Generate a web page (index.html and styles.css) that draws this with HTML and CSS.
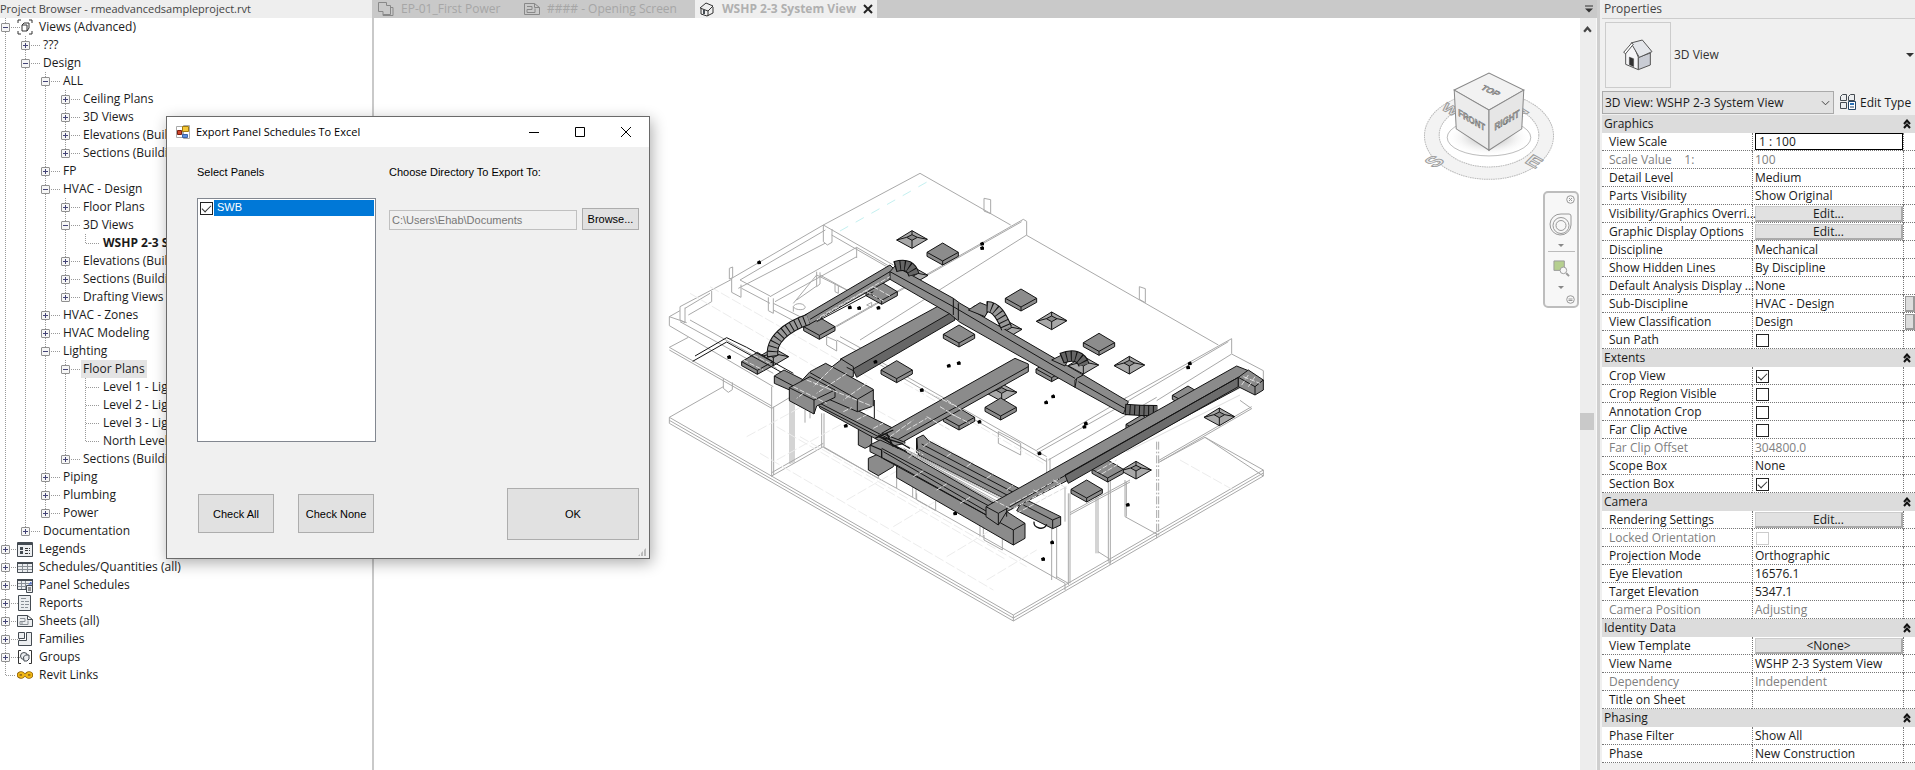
FILE: index.html
```html
<!DOCTYPE html>
<html lang="en">
<head>
<meta charset="utf-8">
<title>rmeadvancedsampleproject.rvt</title>
<link rel="stylesheet" href="styles.css">
</head>
<body>
<div class="app">
<aside class="browser">
<h2 class="panel-title">Project Browser - rmeadvancedsampleproject.rvt</h2>
<ul class="tree">
<li><div class="row"><button class="tg open" aria-label="Collapse"></button><i class="ln"></i><svg class="ico" viewBox="0 0 16 16"><path d="M1 4V1h3M12 1h3v3M15 12v3h-3M4 15H1v-3M5 6l2-2h5v5l-2 3H5zM5 6h5v6" /></svg><span>Views (Advanced)</span></div>
<ul>
<li><div class="row"><button class="tg" aria-label="Expand"></button><i class="ln"></i><span>???</span></div></li>
<li><div class="row"><button class="tg open" aria-label="Collapse"></button><i class="ln"></i><span>Design</span></div>
<ul>
<li><div class="row"><button class="tg open" aria-label="Collapse"></button><i class="ln"></i><span>ALL</span></div>
<ul>
<li><div class="row"><button class="tg" aria-label="Expand"></button><i class="ln"></i><span>Ceiling Plans</span></div></li>
<li><div class="row"><button class="tg" aria-label="Expand"></button><i class="ln"></i><span>3D Views</span></div></li>
<li><div class="row"><button class="tg" aria-label="Expand"></button><i class="ln"></i><span>Elevations (Build</span></div></li>
<li><div class="row"><button class="tg" aria-label="Expand"></button><i class="ln"></i><span>Sections (Buildin</span></div></li>
</ul></li>
<li><div class="row"><button class="tg" aria-label="Expand"></button><i class="ln"></i><span>FP</span></div></li>
<li><div class="row"><button class="tg open" aria-label="Collapse"></button><i class="ln"></i><span>HVAC - Design</span></div>
<ul>
<li><div class="row"><button class="tg" aria-label="Expand"></button><i class="ln"></i><span>Floor Plans</span></div></li>
<li><div class="row"><button class="tg open" aria-label="Collapse"></button><i class="ln"></i><span>3D Views</span></div>
<ul><li><div class="row"><i class="ln leaf"></i><b>WSHP 2-3 S</b></div></li></ul></li>
<li><div class="row"><button class="tg" aria-label="Expand"></button><i class="ln"></i><span>Elevations (Build</span></div></li>
<li><div class="row"><button class="tg" aria-label="Expand"></button><i class="ln"></i><span>Sections (Buildin</span></div></li>
<li><div class="row"><button class="tg" aria-label="Expand"></button><i class="ln"></i><span>Drafting Views (</span></div></li>
</ul></li>
<li><div class="row"><button class="tg" aria-label="Expand"></button><i class="ln"></i><span>HVAC - Zones</span></div></li>
<li><div class="row"><button class="tg" aria-label="Expand"></button><i class="ln"></i><span>HVAC Modeling</span></div></li>
<li><div class="row"><button class="tg open" aria-label="Collapse"></button><i class="ln"></i><span>Lighting</span></div>
<ul>
<li><div class="row"><button class="tg open" aria-label="Collapse"></button><i class="ln"></i><span class="sel">Floor Plans</span></div>
<ul>
<li><div class="row"><i class="ln leaf"></i><span>Level 1 - Lig</span></div></li>
<li><div class="row"><i class="ln leaf"></i><span>Level 2 - Lig</span></div></li>
<li><div class="row"><i class="ln leaf"></i><span>Level 3 - Lig</span></div></li>
<li><div class="row"><i class="ln leaf"></i><span>North Level</span></div></li>
</ul></li>
<li><div class="row"><button class="tg" aria-label="Expand"></button><i class="ln"></i><span>Sections (Buildin</span></div></li>
</ul></li>
<li><div class="row"><button class="tg" aria-label="Expand"></button><i class="ln"></i><span>Piping</span></div></li>
<li><div class="row"><button class="tg" aria-label="Expand"></button><i class="ln"></i><span>Plumbing</span></div></li>
<li><div class="row"><button class="tg" aria-label="Expand"></button><i class="ln"></i><span>Power</span></div></li>
</ul></li>
<li><div class="row"><button class="tg" aria-label="Expand"></button><i class="ln"></i><span>Documentation</span></div></li>
</ul></li>
<li><div class="row"><button class="tg" aria-label="Expand"></button><i class="ln"></i><svg class="ico" viewBox="0 0 16 16"><path class="f" d="M.5 1.500h15v14H.5z"/><path class="k" d="M1 2h14v2H1zM3 6h3v3H3zM3 10h3v3H3z"/><path d="M8 7.500h5M8 9.500h5M8 12.500h5" stroke-dasharray="3 1"/></svg><span>Legends</span></div></li>
<li><div class="row"><button class="tg" aria-label="Expand"></button><i class="ln"></i><svg class="ico" viewBox="0 0 16 16"><path class="f" d="M.5 3.500h15v10H.5z"/><path class="k" d="M0 3h16v2H0z"/><path class="g" d="M1 7.500h14M1 10.500h14M5.500 5v8M10.500 5v8"/></svg><span>Schedules/Quantities (all)</span></div></li>
<li><div class="row"><button class="tg" aria-label="Expand"></button><i class="ln"></i><svg class="ico" viewBox="0 0 16 16"><path class="f" d="M.5 2.500h15v10H.5z"/><path class="k" d="M0 2h16v2H0z"/><path class="g" d="M1 6.500h14M1 9.500h8M4.500 4v8M8.500 4v8"/><path class="b" d="M11 9l3-4v4"/><path class="f" d="M9.500 8.500h6v7h-6z"/><path d="M11 11h3M11 13h3"/></svg><span>Panel Schedules</span></div></li>
<li><div class="row"><button class="tg" aria-label="Expand"></button><i class="ln"></i><svg class="ico" viewBox="0 0 16 16"><path class="f" d="M1.500.5h12v15h-12z"/><path class="g" d="M4 3.500h5M4 6.500h3M8 6.500h4M4 9.500h3M8 9.500h4M4 12.500h3M8 12.500h3"/></svg><span>Reports</span></div></li>
<li><div class="row"><button class="tg" aria-label="Expand"></button><i class="ln"></i><svg class="ico" viewBox="0 0 16 16"><path class="f" d="M.5 2.500h10l5 4v7H.5zM10.500 2.500v4h5"/><path class="g" d="M3 5.500h5v3H3v3h8v-4"/><path class="g" d="M5 9v3"/></svg><span>Sheets (all)</span></div></li>
<li><div class="row"><button class="tg" aria-label="Expand"></button><i class="ln"></i><svg class="ico" viewBox="0 0 16 16"><path class="f" d="M1.500 1.500h6v6h-6zM9.500 1.500h5v13h-13v-5h8z"/></svg><span>Families</span></div></li>
<li><div class="row"><button class="tg" aria-label="Expand"></button><i class="ln"></i><svg class="ico" viewBox="0 0 16 16"><path d="M4 1.500H1.500v13H4M12 1.500h2.500v13H12"/><circle class="f" cx="7" cy="7" r="3.500"/><path class="f" d="M6.500 8l2-2H12v4l-2 2H7z"/></svg><span>Groups</span></div></li>
<li><div class="row"><i class="ln root"></i><svg class="ico" viewBox="0 0 16 16"><g fill="none" stroke="#8a5a00" stroke-width="3.500"><ellipse cx="4" cy="8" rx="2.500" ry="2"/><ellipse cx="12" cy="8" rx="2.500" ry="2"/></g><g fill="none" stroke="#f0b818" stroke-width="1.800"><ellipse cx="4" cy="8" rx="2.500" ry="2"/><ellipse cx="12" cy="8" rx="2.500" ry="2"/><path d="M5 8h6"/></g></svg><span>Revit Links</span></div></li>
</ul>
</aside>

<main class="work">
<nav class="tabs">
<a class="tab t1" href="#ep"><svg class="ico" viewBox="0 0 16 16"><path d="M.5 1.500h8v3h4v9H5M.5 1.500v9H5v4h10v-8h-3" stroke="#888"/></svg><span>EP-01_First Power</span></a>
<a class="tab t2" href="#open"><svg class="ico" viewBox="0 0 16 16"><path d="M.5 2.500h10l5 4v7H.5zM10.500 2.500v4h5M3 5.500h5v3H3v3h8v-4" stroke="#888"/></svg><span>#### - Opening Screen</span></a>
<a class="tab active" href="#wshp"><svg class="ico" viewBox="0 0 16 16"><path d="M1 7l6-5 7 3-5 5zM2 8v5l6 2 6-3V6M9 10v5" stroke="#333"/><path class="k" d="M4 9h2v4H4z"/></svg><span>WSHP 2-3 System View</span><svg class="x" viewBox="0 0 10 10"><path d="M1 1l8 8M9 1L1 9"/></svg></a>
<button class="tabmenu" aria-label="Tab list"><svg viewBox="0 0 8 8"><path class="bar" d="M0 1h8"/><path class="arr" d="M0 3.500h8L4 7.500z"/></svg></button>
</nav>
<div class="view">
<svg class="model" viewBox="-858 -426 3618 2256" role="img" aria-label="3D model of ductwork">
<defs>
<g id="tile"><path fill="#8c8c8c" d="M-47 0L0-28 47 0V12L0 38-47 12z"/><path fill="none" d="M-47 0L0 26 47 0M0 26V38"/></g>
<g id="pyr"><path fill="#a8a8a8" d="M-46 2L0-26 46 0 0 27z"/><path fill="#888" d="M-16-6L0-14 16-6 0 3z"/><path fill="none" d="M-46 2L-16-6M46 0L16-6M0-26v12M0 27V3"/></g>
<g id="dot" fill="#000" stroke="none"><path d="M-6-2L2-6 6-2V5L-4 6z"/></g>
</defs>
<g class="wall">
<path d="M490 195L780 40 1052 195M215 355L490 195 700 315M240 360L496 210M235 385L495 250M490 195v50l12 10 14-8v-40M515 225L680 320M330 410L590 262 690 320M345 425L590 290M590 262v32M240 360L330 408M215 355v42l28 15v-38M245 385L330 430M325 412v40l15 8v-45M340 430L440 480M340 450L430 498M400 430L470 345 580 400M470 335v45l10-8v-35M480 345L570 395M410 420L470 378M525 370v25l10 5v-22M208 325v32l10-4v-32z"/>
<path d="M60 440L215 358M28 470L60 452M28 470v27L340 680M28 470L80 488M60 440v40l15 8v-45M85 465L155 425v-32M75 445L150 400M28 562L85 532M28 562L335 738M28 570L335 745L390 712M60 485L340 640M90 480L350 625M335 680V950M341 740V945M390 700V912M396 700V910M402 700V908M485 760V862M492 760V860M435 750v38M450 745v30M190 655v30l15 12 12-8v-22M28 772L190 680"/>
<path d="M335 948L490 860M335 938L490 850M490 862L655 955M500 530v25l30 18v-30zM530 540L640 600M490 520L1090 178M530 500L1085 185M540 530L640 585M600 540L1100 225M620 435l15-8v15zM400 440c5-12 30-12 35 0s-30 12-35 0v15"/>
<path d="M28 772L1060 1365L1810 930M28 781L1060 1374L1810 939M28 790L1060 1383L1810 948M28 772v18M1060 1365v18M1810 930v18L1635 832"/>
<path d="M972 115v38l20 8v-42zM1090 178l10 6v42M1100 226L1675 555M1438 380v38l18 10v-42zM1390 718L1715 536v45M1400 725L1705 545M1490 722L1715 582l95 50v30"/>
<path d="M600 570L1160 890M610 585L1160 905M1015 815v35l67 35v-35zM1130 870L1400 712M1130 880L1405 725M1165 900L1490 712M1160 895v50M1170 895v50"/>
</g>
<g class="wall" transform="translate(300 660)">
<path d="M1190 185V470M1196 185V470" stroke-dasharray="24 6 5 6"/>
<path d="M1475 80L1195 242M1475 86L1195 248M1475 86l-35-25M930 398L1110 300M930 404L1110 306M1045 290V545M1051 290V550M1008 350V520M1014 350V520M925 340V615M930 340V610M875 445V600M890 440V595M915 320v105M1095 300V410L1190 462M1099 305V410M1335 172L1200 245M1510 270L1335 172M190 200L355 295M410 325L915 610M355 270v25l55 30v-35M458 310v42M468 315v42M470 340v20l57 32v-30M660 435v35M670 440v30M672 465v15l55 30V430M890 590l35 20M1014 515l35 22M915 610v20M1050 540v15M1190 460v15"/>
<path d="M1090 190L1450 20M1100 215L1440 45" stroke="#ddd"/>
</g>
<path d="M540 213L815 58" fill="none" stroke="#c4f0f0" stroke-width="3" stroke-dasharray="28 26"/>
<g class="grid"><path d="M90 400L600 700M150 380L640 660M350 800L1040 1200M420 830L1100 1220M300 880L1000 1290M260 830L480 710M350 900L640 740M560 1020L750 910M700 1100L850 1010M860 1190L1010 1100M980 1260L1130 1170M700 650L1150 910M1560 900L1720 990M650 750L1100 1000"/></g>

<g class="duct">
<use href="#pyr" x="756" y="238"/><use href="#tile" x="848" y="277"/><use href="#tile" x="665" y="395"/><use href="#tile" x="478" y="500"/><use href="#tile" x="897" y="523"/><use href="#tile" x="710" y="630"/><use href="#pyr" x="758" y="346"/><use href="#pyr" x="340" y="590"/><use href="#tile" x="292" y="605"/>
<use href="#tile" x="1083" y="415"/><use href="#pyr" x="1175" y="482"/><use href="#tile" x="1317" y="548"/><use href="#pyr" x="1408" y="615"/><use href="#pyr" x="1025" y="697"/><use href="#tile" x="1022" y="742"/><use href="#tile" x="897" y="772"/><use href="#tile" x="1175" y="627"/><use href="#pyr" x="1270" y="615"/><use href="#pyr" x="1040" y="508"/>
<use href="#tile" x="1584" y="706"/><use href="#tile" x="1445" y="793"/><use href="#pyr" x="1678" y="770"/><use href="#pyr" x="1428" y="930"/><use href="#tile" x="1343" y="928"/><use href="#tile" x="1280" y="988"/>
<path d="M105 588L200 533 260 562 400 640M98 604L200 546 370 640" fill="none"/>
<path d="M343 648L372 630 435 662 400 695 343 670z"/><path d="M343 648L400 678" fill="none"/>
<path d="M940 440l20-8 30 16-20 25z"/>
<path d="M435 465L690 315 705 330 690 358 450 492z"/><path d="M450 478L690 335M470 485L640 395" fill="none"/>
<path fill="#666" d="M575 620L880 448 885 480 590 652z"/><path d="M540 598L865 422 895 438 882 453 578 628z"/>
<path d="M705 318L880 415 900 430 1270 645 1245 660 1245 682 900 487 870 462 690 358 690 335z"/><path d="M690 335L880 440 1245 655M880 415v50M895 430v50" fill="none"/>
<path d="M1250 655L1270 645 1405 725 1390 762 1245 682z"/><path d="M1255 665L1395 745" fill="none"/>
<path d="M925 450L960 428 990 440 975 470z"/><path d="M1175 600L1205 585 1225 598 1215 618z"/>
</g>
<g class="flex">
<path class="o" d="M338 590C330 540 380 500 445 478"/><path class="i" d="M338 590C330 540 380 500 445 478"/><path class="r" d="M338 590C330 540 380 500 445 478"/>
<path class="o" d="M705 320C740 310 755 320 762 345"/><path class="i d" d="M705 320C740 310 755 320 762 345"/><path class="r" d="M705 320C740 310 755 320 762 345"/>
<path class="o" d="M980 440C1010 440 1025 470 1040 505"/><path class="i" d="M980 440C1010 440 1025 470 1040 505"/><path class="r" d="M980 440C1010 440 1025 470 1040 505"/>
<path class="o" d="M1205 595C1240 580 1265 590 1272 615"/><path class="i d" d="M1205 595C1240 580 1265 590 1272 615"/><path class="r" d="M1205 595C1240 580 1265 590 1272 615"/>
<path class="o" d="M1395 748Q1440 752 1492 752"/><path class="i d" d="M1395 748Q1440 752 1492 752"/><path class="r" d="M1395 748Q1440 752 1492 752"/>
</g>
<g class="duct">
<path d="M595 800h30l10 30v25l-20 10-20-10z"/>
<path d="M470 722L500 705 730 820 735 850 690 860 480 745z"/><path d="M480 730L690 838M478 738L690 848" fill="none"/>
<path d="M510 625L545 598 580 620V650L560 655z"/>
<path d="M425 662L450 635 497 610 640 688V738L592 755 500 715z"/><path d="M450 638L592 718 640 690M592 718V755M560 622L580 632" fill="none"/>
<path d="M388 683L450 650 525 690V712L470 738 462 762 388 722z"/><path d="M388 683L462 720 525 690M462 720V762" fill="none"/><path d="M643 720V775" fill="none"/>
</g>
<g class="duct" transform="translate(300 660)">
<path d="M365 160L765-65 805-48V-25L430 185z"/><path d="M415 178L805-40" fill="none"/>
<path d="M325 235L355 222 410 240 400 260 355 287 325 270z"/>
<path d="M470 175L490 165 505 182 790 332 745 362 475 225z"/><path d="M485 192L775 345M478 208L760 355" fill="none"/>
<path fill="#fff" stroke="#999" d="M430 205L470 225 742 362 720 378z"/><path d="M440 215L720 368M450 218L730 362M450 226L710 368" fill="none" stroke="#aaa"/>
<path d="M330 195L360 180 430 212 705 372 795 430V475L760 495 410 293V255L330 215z"/>
<path d="M410 255L760 450 795 430M760 450V495M365 205L700 385M368 235L715 425M370 215L690 400" fill="none"/>
<path d="M780 375L800 360 902 410V435L878 446 770 392z"/><path d="M790 375L878 420 902 410M878 420V446" fill="none"/>
<path d="M678 380L1430-42 1465-28 1440 22 925 300 740 395 715 435 678 410z"/>
<path fill="#6c6c6c" d="M915 285L1435-8V20L925 310z"/><path d="M678 380L715 400 1435-8M715 400V435M740 385V410" fill="none"/>
<path d="M1435-8L1465-30 1510 0V30L1485 45 1435 20z"/><path d="M1435-8L1485 20 1510 0M1485 20V45" fill="none"/>
<path d="M822 425c-2 20 30 28 38 8" fill="none" stroke-width="4"/>
<path d="M330 195L365 210V235M360 170L425 190 450 205M380 160L400 200M390 190L440 215M345 175L400 150M355 165l60 40M470 175V218" fill="none" stroke-width="4"/>
</g>
<g class="hatch"><path d="M250 600l60 30M280 585l55 28M640 380l50 28M620 395l50 28M470 480L640 380M480 470L690 350M400 680l100 50M440 660l200 80M520 620l-60 60M560 640l-90 60M620 670l-70 50M690 830l70-50M740 810l60-35M800 770l70 40M840 740l50 30M860 720l45 30M870 760l60 30M790 690l100 50M430 700l-20 15M550 755l25-12M590 780l30-16M640 805l30-16M790 860l20-15M860 890l20-15M920 920l20-15M980 955l20-15M1040 990l20-15M760 950l30-18M830 990l30-18M900 1030l30-18M1000 1020l60 30M1050 1035l150-80M1060 1045l150-80M1070 1060l150-80M1120 990l40 20M1180 960l40 25M1310 935l60-35M1325 942l50-30M1750 650l50 20M1765 645l-20 30M1785 650l-20 30M720 860l60 35M730 850l60 35M745 895l30-30"/></g>
<g><use href="#dot" x="297" y="307"/><use href="#dot" x="207" y="591"/><use href="#dot" x="569" y="442"/><use href="#dot" x="597" y="444"/><use href="#dot" x="655" y="443"/><use href="#dot" x="646" y="605"/><use href="#dot" x="785" y="690"/><use href="#dot" x="557" y="797"/><use href="#dot" x="866" y="617"/><use href="#dot" x="896" y="609"/><use href="#dot" x="966" y="251"/><use href="#dot" x="966" y="264"/><use href="#dot" x="1589" y="610"/><use href="#dot" x="1584" y="622"/><use href="#dot" x="1179" y="709"/><use href="#dot" x="1158" y="727"/><use href="#dot" x="1277" y="790"/><use href="#dot" x="1273" y="800"/><use href="#dot" x="1138" y="880"/><use href="#dot" x="958" y="785"/><use href="#dot" x="1403" y="1034"/><use href="#dot" x="1176" y="1147"/><use href="#dot" x="1149" y="1197"/><use href="#dot" x="885" y="1060"/></g>
</svg>

<div class="overlay">
<svg class="cube" viewBox="70 60 400 335" role="img" aria-label="View cube">
<defs><radialGradient id="sh"><stop offset="0" stop-color="#999"/><stop offset="1" stop-color="#fff" stop-opacity="0"/></radialGradient></defs>
<ellipse cx="267" cy="257" rx="193" ry="130" fill="#f3f3f3" stroke="#bbb" stroke-width="3" stroke-dasharray="5 2"/>
<ellipse cx="267" cy="255" rx="149" ry="95" fill="#fff" stroke="#bbb" stroke-width="3" stroke-dasharray="5 2"/>
<ellipse cx="267" cy="262" rx="125" ry="55" fill="url(#sh)"/>
<g font-family="Liberation Sans, Arial, sans-serif" font-weight="bold" fill="#ececec" stroke="#999" stroke-width="3" text-anchor="middle"><text font-size="60" transform="matrix(.9 -.5 .8 .5 120 344)">S</text><text font-size="60" transform="matrix(.9 .5 -.6 .6 390 346)">E</text><text font-size="48" transform="matrix(.9 .5 -.6 .6 142 188)">W</text><text font-size="48" transform="matrix(.9 -.5 .8 .5 374 194)">N</text></g>
<g stroke="#888" stroke-width="3"><path fill="#f2f2f2" d="M163 120L267 69 371 120 267 180z"/><path fill="#ececec" d="M163 120L267 180V300L169 236z"/><path fill="#e6e6e6" d="M371 120L267 180V300L365 236z"/></g>
<g font-family="Liberation Sans, Arial, sans-serif" font-weight="bold" fill="#aaa" text-anchor="middle"><text font-size="28" transform="matrix(.88 .42 -.7 .6 265 128)">TOP</text><text font-size="30" transform="matrix(.78 .46 0 1 215 220)">FRONT</text><text font-size="30" transform="matrix(.8 -.46 0 1 321 220)">RIGHT</text></g>
</svg>
<div class="navbar">
<button class="nb end" aria-label="Close"><svg viewBox="0 0 9 9"><circle cx="4.500" cy="4.500" r="3.800"/><path d="M3 3l3 3M6 3L3 6"/></svg></button>
<button class="nb" aria-label="Steering wheel"><svg class="wheel" viewBox="0 0 24 24"><path d="M12 1h8q2 0 2 2v9a10.500 10.500 0 1 1-10-11z"/><circle cx="12" cy="12.500" r="8"/><circle cx="12" cy="12.500" r="5"/></svg></button>
<span class="tri"></span><hr>
<button class="nb" aria-label="Zoom"><svg class="zoom" viewBox="0 0 18 18"><path fill="#b5cf8e" stroke="#999" d="M1 1h11v10H1z"/><circle cx="11" cy="11" r="3.500" fill="#f7f7f7"/><path d="M14 14l3 3" stroke-width="2"/></svg></button>
<span class="tri"></span>
<button class="nb end last" aria-label="Options"><svg viewBox="0 0 9 9"><circle cx="4.500" cy="4.500" r="3.800"/><path d="M2.500 4h4M2.500 5.500h4"/></svg></button>
</div>
</div>
<div class="scroll"><svg viewBox="0 0 8 6"><path d="M1 5l3-3.500L7 5"/></svg><div class="thumb"></div></div>
</div>
</main>

<aside class="props">
<h2 class="panel-title">Properties</h2>
<div class="type">
<div class="thumbpic"><svg viewBox="0 0 90 96"><g stroke="#555" stroke-width="3" stroke-linejoin="round"><path fill="#f5f5f7" d="M8 38L30 15 46 55V92L8 76z"/><path fill="#c9ccd4" d="M46 55L82 42V78L46 92z"/><path fill="#e4e6ea" d="M24 12L58 3 87 38 49 55z"/><path fill="#fff" d="M2 40L26 12l5 4L8 44z"/></g><path fill="#333" d="M19 54l13 5v24l-13-6z"/></svg></div>
<span>3D View</span><i class="caret"></i>
</div>
<div class="inst">
<div class="selwrap"><select aria-label="Instance"><option>3D View: WSHP 2-3 System View</option></select><svg viewBox="0 0 10 6"><path d="M1 1l4 4 4-4"/></svg></div>
<button class="edittype"><svg class="ico" viewBox="0 0 16 16"><path class="f" d="M.5 2.500l2-2h4v6h-6zM8.500 2.500l2-2h4v6h-6zM.5 8.500h6v6h-6z"/><path d="M8.500 7.500h7v8h-7z" fill="#fff" stroke="#246"/><path fill="#2a72b8" stroke="none" d="M10 9h4v2h-4z"/><path d="M10 13h4" stroke="#246"/></svg><span>Edit Type</span></button>
</div>
<table class="grid-table">
<colgroup><col class="c1"><col class="c2"><col></colgroup>
<tbody>
<tr class="sec"><th colspan="2">Graphics</th><th><svg viewBox="0 0 8 10"><path d="M1 5l3-3.500L7 5M1 9l3-3.500L7 9"/></svg></th></tr>
<tr><td><label for="vs">View Scale</label></td><td><input id="vs" class="scale" value="1 : 100"></td><td></td></tr>
<tr class="off"><td>Scale Value&nbsp;&nbsp;&nbsp; 1:</td><td>100</td><td></td></tr>
<tr><td>Detail Level</td><td>Medium</td><td></td></tr>
<tr><td>Parts Visibility</td><td>Show Original</td><td></td></tr>
<tr><td>Visibility/Graphics Overri...</td><td><button class="vb">Edit...</button></td><td></td></tr>
<tr><td>Graphic Display Options</td><td><button class="vb">Edit...</button></td><td></td></tr>
<tr><td>Discipline</td><td>Mechanical</td><td></td></tr>
<tr><td>Show Hidden Lines</td><td>By Discipline</td><td></td></tr>
<tr><td>Default Analysis Display ...</td><td>None</td><td></td></tr>
<tr><td>Sub-Discipline</td><td>HVAC - Design</td><td><button class="mini" aria-label="Associate Sub-Discipline"></button></td></tr>
<tr><td>View Classification</td><td>Design</td><td><button class="mini" aria-label="Associate View Classification"></button></td></tr>
<tr><td><label for="k1">Sun Path</label></td><td><input id="k1" type="checkbox"></td><td></td></tr>
<tr class="sec"><th colspan="2">Extents</th><th><svg viewBox="0 0 8 10"><path d="M1 5l3-3.500L7 5M1 9l3-3.500L7 9"/></svg></th></tr>
<tr><td><label for="k2">Crop View</label></td><td><input id="k2" type="checkbox" checked></td><td></td></tr>
<tr><td><label for="k3">Crop Region Visible</label></td><td><input id="k3" type="checkbox"></td><td></td></tr>
<tr><td><label for="k4">Annotation Crop</label></td><td><input id="k4" type="checkbox"></td><td></td></tr>
<tr><td><label for="k5">Far Clip Active</label></td><td><input id="k5" type="checkbox"></td><td></td></tr>
<tr class="off"><td>Far Clip Offset</td><td>304800.0</td><td></td></tr>
<tr><td>Scope Box</td><td>None</td><td></td></tr>
<tr><td><label for="k6">Section Box</label></td><td><input id="k6" type="checkbox" checked></td><td></td></tr>
<tr class="sec"><th colspan="2">Camera</th><th><svg viewBox="0 0 8 10"><path d="M1 5l3-3.500L7 5M1 9l3-3.500L7 9"/></svg></th></tr>
<tr><td>Rendering Settings</td><td><button class="vb">Edit...</button></td><td></td></tr>
<tr class="off"><td><label for="k7">Locked Orientation</label></td><td><input id="k7" type="checkbox" disabled></td><td></td></tr>
<tr><td>Projection Mode</td><td>Orthographic</td><td></td></tr>
<tr><td>Eye Elevation</td><td>16576.1</td><td></td></tr>
<tr><td>Target Elevation</td><td>5347.1</td><td></td></tr>
<tr class="off"><td>Camera Position</td><td>Adjusting</td><td></td></tr>
<tr class="sec"><th colspan="2">Identity Data</th><th><svg viewBox="0 0 8 10"><path d="M1 5l3-3.500L7 5M1 9l3-3.500L7 9"/></svg></th></tr>
<tr><td>View Template</td><td><button class="vb">&lt;None&gt;</button></td><td></td></tr>
<tr><td>View Name</td><td>WSHP 2-3 System View</td><td></td></tr>
<tr class="off"><td>Dependency</td><td>Independent</td><td></td></tr>
<tr><td>Title on Sheet</td><td></td><td></td></tr>
<tr class="sec"><th colspan="2">Phasing</th><th><svg viewBox="0 0 8 10"><path d="M1 5l3-3.500L7 5M1 9l3-3.500L7 9"/></svg></th></tr>
<tr><td>Phase Filter</td><td>Show All</td><td></td></tr>
<tr><td>Phase</td><td>New Construction</td><td></td></tr>
</tbody>
</table>
</aside>
</div>

<section class="dialog" role="dialog" aria-labelledby="dt">
<header class="dbar">
<svg class="dico" viewBox="0 0 14 14"><path fill="#fff" stroke="#aaa" d="M.5 1.500h6v11h-6zM7.500.5h6v13h-6z"/><path fill="#f5c838" stroke="#a07a10" d="M6.500 1.500h6v5h-6z"/><path fill="#d0452a" stroke="#7a2010" d="M1.500 5.500h4v4h-4z"/><path fill="#5b8fe0" stroke="#3c64a8" d="M6.500 9.500h5v3h-5z"/></svg>
<h1 id="dt">Export Panel Schedules To Excel</h1>
<button class="wb" aria-label="Minimize"><svg viewBox="0 0 12 12"><path d="M1 6.500h10"/></svg></button>
<button class="wb" aria-label="Maximize"><svg viewBox="0 0 12 12"><path d="M1.500 1.500h9v9h-9z"/></svg></button>
<button class="wb" aria-label="Close"><svg viewBox="0 0 12 12"><path d="M1 1l10 10M11 1L1 11"/></svg></button>
</header>
<div class="dbody">
<div class="dleft">
<span class="lab">Select Panels</span>
<div class="list"><label class="item"><input type="checkbox" checked><span>SWB</span></label></div>
<div class="pair"><button class="db">Check All</button><button class="db">Check None</button></div>
</div>
<div class="dright">
<label class="lab" for="dir">Choose Directory To Export To:</label>
<div class="dirrow"><input id="dir" value="C:\Users\Ehab\Documents" disabled><button class="db">Browse...</button></div>
<button class="db ok">OK</button>
</div>
</div>
<span class="grip"></span>
</section>
</body>
</html>
```
FILE: styles.css
```css
* { box-sizing: border-box; }
body { margin: 0; font: 12px/18px "Segoe UI", "Open Sans", sans-serif; color: #1a1a1a; background: #fff; }
button, input, select { font: inherit; color: inherit; margin: 0; padding: 0; border: 0; background: none; border-radius: 0; }
h1, h2 { margin: 0; font-weight: normal; font-size: 11px; }
svg { fill: none; stroke: #333; }
.app { display: flex; height: 100vh; overflow: hidden; }

.browser { flex: 0 0 374px; border-right: 2px solid #c9c9c9; overflow: hidden; }
.panel-title { height: 18px; background: #eee; color: #444; line-height: 18px; white-space: nowrap; }
.tree, .tree ul { list-style: none; margin: 0; padding: 0; }
.tree ul { padding-left: 20px; }
.tree li { background: repeating-linear-gradient(#999 0 1px, transparent 1px 2px) 5px 0 / 1px 100% no-repeat; }
.tree li:last-child { background-size: 1px 10px; }
.row { display: flex; align-items: center; height: 18px; padding-left: 1px; white-space: nowrap; }
.tg { flex: none; width: 9px; height: 9px; border: 1px solid #909090; border-radius: 1px; background: linear-gradient(#447, #447) center / 5px 1px no-repeat, linear-gradient(#447, #447) center / 1px 5px no-repeat, #f6f6f6; }
.tg.open { background: linear-gradient(#447, #447) center / 5px 1px no-repeat, #f6f6f6; }
.ln { flex: none; width: 9px; height: 1px; margin: 0 1px; background: repeating-linear-gradient(90deg, #999 0 1px, transparent 1px 2px); }
.ln.leaf { width: 14px; margin-left: 5px; }
.ln.root { width: 10px; margin-left: 5px; }
.row span, .row b { padding: 0 2px; }
.row .ico { margin: 0 4px 0 -4px; }
.row .root + .ico { margin-left: 0; }
.sel { background: #e4e4e4; }
.ico { flex: none; width: 16px; height: 16px; }
.ico .f { fill: #eceef0; stroke: #444b52; }
.ico .k { fill: #444b52; stroke: none; }
.ico .g { stroke: #8a9096; }
.ico .b { stroke: #4a6ac8; }

.work { flex: 1; min-width: 0; display: flex; flex-direction: column; border-right: 3px solid #cfcfcf; }
.tabs { display: flex; height: 18px; background: #c9c9c9; }
.tab { display: flex; align-items: center; gap: 7px; padding-left: 4px; color: #a6a6a6; text-decoration: none; white-space: nowrap; }
.t1 { width: 146px; }
.t2 { width: 175px; }
.tab.active { width: 182px; background: #efefef; font-weight: bold; color: #b0b0b0; }
.tab .x { width: 10px; height: 10px; stroke: #222; stroke-width: 2; }
.tabmenu { margin-left: auto; width: 16px; }
.tabmenu svg { display: block; width: 8px; height: 8px; margin-left: 4px; }
.tabmenu .arr { fill: #333; stroke: none; }
.view { flex: 1; min-height: 0; display: flex; position: relative; }
.model { flex: 1; min-width: 0; height: 100%; stroke-linejoin: round; }
.wall { stroke: #a9a9a9; stroke-width: 3; }
.grid { stroke: #ececec; stroke-width: 3; stroke-dasharray: 30 8; }
.duct { fill: #8b8b8b; stroke: #141414; stroke-width: 3; }
.hatch { stroke: #ddd; stroke-width: 3; stroke-dasharray: 16 5; }
.flex .o { stroke: #111; stroke-width: 34; }
.flex .i { stroke: #999; stroke-width: 28; }
.flex .i.d { stroke: #666; }
.flex .r { stroke: #111; stroke-width: 30; stroke-dasharray: 3 11; }
.overlay { position: absolute; top: 52px; right: 18px; display: flex; flex-direction: column; align-items: flex-end; }
.cube { width: 134px; height: 112px; margin: 0 22px 9px 0; }
.navbar { display: flex; flex-direction: column; align-items: center; width: 36px; height: 117px; padding: 2px; border: 2px solid #bdbdbd; border-radius: 5px; background: #f7f7f7; }
.navbar svg { display: block; stroke: #999; width: 9px; height: 9px; }
.navbar .wheel { width: 24px; height: 24px; margin: 9px 0 7px; }
.navbar .zoom { width: 17px; height: 17px; margin-bottom: 9px; }
.nb.end { align-self: flex-end; }
.nb.last { margin-top: auto; }
.tri { border: 3px solid transparent; border-top-color: #888; border-bottom: 0; }
.navbar hr { width: 27px; margin: 4px 0 8px; border: 0; border-top: 1px solid #bbb; }
.scroll { flex: none; width: 17px; padding-right: 2px; background: #ededed; border-right: 1px solid #f8f8f8; }
.scroll svg { display: block; width: 9px; height: 7px; margin: 8px auto 0 3px; stroke: #444; stroke-width: 2; }
.thumb { height: 17px; margin-top: 380px; background: #c9c9c9; }

.props { flex: 0 0 315px; background: #f0f0f0; overflow: hidden; padding-left: 2px; }
.props .panel-title { padding-left: 2px; font-size: 12px; }
.type { display: flex; align-items: center; height: 72px; padding-left: 3px; border-top: 1px solid #ccc; gap: 3px; color: #333; }
.thumbpic { display: flex; width: 66px; height: 66px; border: 1px solid #ccc; }
.thumbpic svg { width: 30px; height: 32px; margin: auto; }
.caret { margin: 0 1px 0 auto; border: 4px solid transparent; border-top-color: #333; border-bottom: 0; }
.inst { display: flex; align-items: center; height: 25px; gap: 6px; }
.selwrap { position: relative; flex: 0 0 232px; }
.selwrap select { width: 100%; height: 23px; padding-left: 2px; border: 1px solid #aaa; background: #e2e2e2; appearance: none; }
.selwrap svg { position: absolute; right: 4px; top: 9px; width: 9px; height: 6px; }
.edittype { display: flex; gap: 4px; white-space: nowrap; }
.grid-table { width: 100%; table-layout: fixed; border-collapse: separate; border-spacing: 0; background: #fff; }
.c1 { width: 150px; }
.c2 { width: 151px; }
.grid-table tr { height: 18px; }
.grid-table td { height: 18px; padding: 0; line-height: 16px; border-bottom: 1px dotted #777; white-space: nowrap; }
.grid-table td:first-child { padding-left: 7px; }
.grid-table td + td { padding-left: 2px; border-left: 1px dotted #777; }
.grid-table td + td + td { padding-left: 1px; }
.grid-table td label, .grid-table td input, .grid-table td button { display: block; }
.sec th { height: 18px; padding: 0 0 0 2px; background: #dcdcdc; font-weight: normal; text-align: left; line-height: 18px; }
.sec th + th { padding: 0; }
.sec svg { display: block; width: 8px; height: 10px; stroke: #111; stroke-width: 2; }
.off { color: #808080; }
.scale { width: 100%; height: 17px; padding-left: 3px; border: 1px solid #000; outline: 1px solid #000; outline-offset: -1px; }
.vb { width: 100%; height: 16px; line-height: 13px; background: #e1e1e1; border: 1px solid #ccc; border-right: 2px solid #aaa; border-bottom: 2px solid #aaa; }
.mini { width: 100%; height: 16px; background: #ddd; border: 1px solid #999; border-width: 1px 2px 2px 1px; }
input[type=checkbox] { appearance: none; width: 13px; height: 13px; margin: 2px 0 0 1px; border: 1px solid #222; background: #fff; }
input[type=checkbox]:disabled { border-color: #ccc; }
input[type=checkbox]:checked::after { content: ""; display: block; width: 8px; height: 4px; margin: 2px 0 0 1px; border: solid #333; border-width: 0 0 1px 1px; transform: rotate(-45deg); }

.dialog { position: absolute; left: 166px; top: 116px; width: 484px; height: 443px; display: flex; flex-direction: column; border: 1px solid #6a6a6a; background: #f0f0f0; box-shadow: 2px 4px 14px rgba(0, 0, 0, .32); color: #000; }
.dbar { display: flex; align-items: center; height: 30px; padding-left: 9px; background: #fff; }
.dbar h1 { flex: 1; margin-left: 6px; }
.dico { width: 14px; height: 14px; }
.wb { display: grid; place-items: center; width: 46px; height: 30px; }
.wb svg { width: 12px; height: 12px; stroke: #000; }
.dbody { flex: 1; display: flex; gap: 13px; padding: 16px 10px 18px 30px; font: 11px/18px "Liberation Sans", Arial, sans-serif; }
.dleft { flex: 0 0 179px; display: flex; flex-direction: column; }
.dright { flex: 1; display: flex; flex-direction: column; }
.list { height: 244px; margin-top: 17px; padding: 1px; border: 1px solid #828790; background: #fff; }
.item { display: flex; height: 16px; line-height: 15px; }
.item input { flex: none; margin: 2px 1px 0 1px; }
.item span { flex: 1; padding-left: 3px; background: #0078d7; color: #fff; }
.pair { display: flex; gap: 24px; margin: auto 0 7px 1px; }
.db { border: 1px solid #adadad; background: #e1e1e1; }
.pair .db { width: 76px; height: 39px; }
.dirrow { display: flex; gap: 5px; align-items: flex-end; margin-top: 27px; }
.dirrow input { flex: 1; min-width: 0; height: 20px; padding-left: 2px; border: 1px solid #c0c0c0; color: #777; }
.dirrow .db { width: 57px; height: 22px; }
.db.ok { width: 132px; height: 52px; margin: auto 0 0 auto; }
.grip { position: absolute; right: 2px; bottom: 2px; width: 9px; height: 9px; background: repeating-linear-gradient(90deg, #bbb 0 2px, transparent 2px 3px); clip-path: polygon(100% 0, 100% 100%, 0 100%); }
```
